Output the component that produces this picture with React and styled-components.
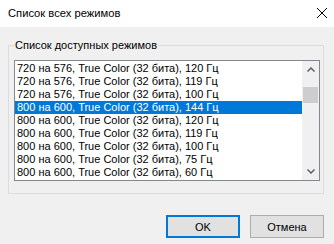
import styled, { createGlobalStyle } from "styled-components";

const Global = createGlobalStyle`
  html, body { margin: 0; padding: 0; }
  body {
    width: 334px;
    height: 244px;
    overflow: hidden;
    font-family: "Liberation Sans", Arial, sans-serif;
    font-size: 11px;
    color: #000;
  }
`;

const Window = styled.div`
  width: 334px;
  height: 244px;
  display: flex;
  flex-direction: column;
  background: #f0f0f0;
`;

const TitleBar = styled.div`
  height: 27px;
  background: #fff;
  display: flex;
  align-items: center;
  justify-content: space-between;
  padding: 0 6px 1px 8px;
  box-sizing: border-box;
`;

const Title = styled.span`
  font-size: 11.2px;
  line-height: 16px;
`;

const Close = styled.svg`
  width: 10px;
  height: 10px;
  margin-right: 1px;
`;

const Body = styled.div`
  flex: 1;
  display: flex;
  flex-direction: column;
  padding: 10px 10px 6px 8px;
`;

const Group = styled.fieldset`
  margin: 0;
  width: 316px;
  box-sizing: border-box;
  border: 1px solid #dcdcdc;
  padding: 7px 3px 12px 5px;
`;

const Legend = styled.legend`
  padding: 0 1px;
  line-height: 16px;
`;

const List = styled.div`
  width: 306px;
  height: 121px;
  box-sizing: border-box;
  border: 1px solid #828790;
  background: #fff;
  display: flex;
`;

const Rows = styled.div`
  flex: 1;
  padding-top: 1px;
`;

const Row = styled.div`
  height: 13px;
  line-height: 13px;
  padding-left: 2px;
  white-space: nowrap;
  overflow: hidden;
  background: ${(p) => (p.$sel ? "#0078d7" : "transparent")};
  color: ${(p) => (p.$sel ? "#fff" : "#000")};
`;

const Scroll = styled.div`
  width: 17px;
  background: #f0f0f0;
  display: flex;
  flex-direction: column;
  align-items: center;
`;

const Arrow = styled.div`
  height: 17px;
  width: 17px;
  display: flex;
  align-items: center;
  justify-content: center;
`;

const Track = styled.div`
  flex: 1;
  width: 15px;
  padding-top: 9px;
`;

const Thumb = styled.div`
  height: 16px;
  background: #cdcdcd;
`;

const Buttons = styled.div`
  margin-top: auto;
  display: flex;
  justify-content: flex-end;
  gap: 10px;
`;

const Button = styled.button`
  width: 74px;
  height: 23px;
  box-sizing: border-box;
  font-family: inherit;
  font-size: 11px;
  color: #000;
  background: #e1e1e1;
  border: ${(p) => (p.$primary ? "2px solid #0078d7" : "1px solid #adadad")};
  padding: 0;
`;

const rows = [
  ["720 на 576", "120"],
  ["720 на 576", "119"],
  ["720 на 576", "100"],
  ["800 на 600", "144"],
  ["800 на 600", "120"],
  ["800 на 600", "119"],
  ["800 на 600", "100"],
  ["800 на 600", "75"],
  ["800 на 600", "60"],
];

const Chevron = ({ up }) => (
  <svg width="8" height="5" viewBox="0 0 8 5">
    <path
      d={up ? "M0.5 4.5 L4 1 L7.5 4.5" : "M0.5 0.5 L4 4 L7.5 0.5"}
      fill="none"
      stroke="#606060"
      strokeWidth="1.5"
    />
  </svg>
);

export default function App() {
  return (
    <>
      <Global />
      <Window>
        <TitleBar>
          <Title>Список всех режимов</Title>
          <Close viewBox="0 0 10 10">
            <path d="M0 0 L10 10 M10 0 L0 10" stroke="#000" strokeWidth="1" />
          </Close>
        </TitleBar>
        <Body>
          <Group>
            <Legend>Список доступных режимов</Legend>
            <List>
              <Rows>
                {rows.map(([res, hz], i) => (
                  <Row key={i} $sel={i === 3}>
                    {res}, True Color (32 бита), {hz} Гц
                  </Row>
                ))}
              </Rows>
              <Scroll>
                <Arrow><Chevron up /></Arrow>
                <Track><Thumb /></Track>
                <Arrow><Chevron /></Arrow>
              </Scroll>
            </List>
          </Group>
          <Buttons>
            <Button $primary>OK</Button>
            <Button>Отмена</Button>
          </Buttons>
        </Body>
      </Window>
    </>
  );
}
